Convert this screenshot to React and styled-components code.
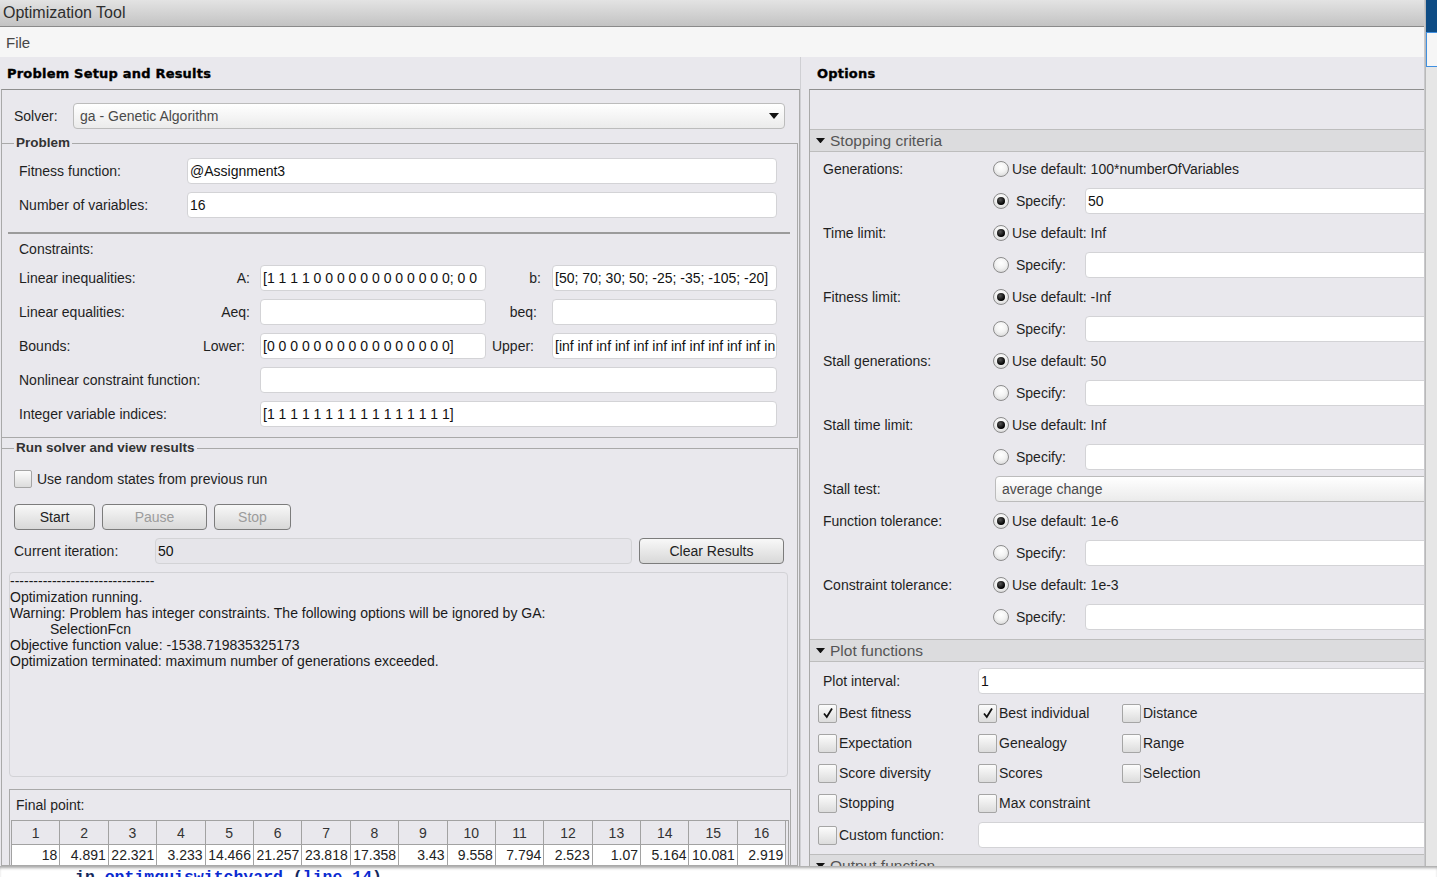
import React from 'react'
import styled, { createGlobalStyle } from 'styled-components'

const GlobalStyle = createGlobalStyle`
  html, body { margin: 0; padding: 0; background: #ffffff; }
  body { font-family: "Liberation Sans", Arial, sans-serif; font-size: 14px; color: #1f1f1f; }
  *, *::before, *::after { box-sizing: border-box; }
`

const Screen = styled.div`
  width: 1437px;
  height: 877px;
  overflow: hidden;
  display: grid;
  grid-template-columns: 1425px 12px;
  grid-template-rows: 866px 11px;
`

const Window = styled.div`
  display: flex;
  flex-direction: column;
  min-height: 0;
  overflow: hidden;
  background: #e9e8ed;
  border-right: 1px solid #c9c9cc;
`

const TitleBar = styled.div`
  height: 27px;
  flex: none;
  display: flex;
  align-items: center;
  padding-left: 3px;
  background: linear-gradient(#e3e3e3, #c3c3c3);
  border-bottom: 1px solid #8a8a8a;
  font-size: 16px;
  color: #2e2e2e;
`

const MenuBar = styled.div`
  height: 30px;
  flex: none;
  display: flex;
  align-items: center;
  padding-left: 6px;
  background: #f6f6f6;
  font-size: 15px;
  color: #474747;
`

const Body = styled.div`
  flex: 1;
  min-height: 0;
  display: grid;
  grid-template-columns: 800px 9px 1fr;
`

const Splitter = styled.div`
  border-left: 1px solid #cfcfd3;
`

const Column = styled.div`
  display: flex;
  flex-direction: column;
  min-height: 0;
  min-width: 0;
  overflow: hidden;
`

const PanelTitle = styled.div`
  height: 32px;
  flex: none;
  display: flex;
  align-items: center;
  padding-left: ${p => p.$indent}px;
  font-family: "DejaVu Sans", sans-serif;
  font-weight: bold;
  font-size: 13px;
  letter-spacing: 0.2px;
  color: #000;
  -webkit-text-stroke: 0.35px #000;
`

const LeftBox = styled.div`
  flex: 1;
  min-height: 0;
  margin-left: 1px;
  padding-top: 13px;
  border-top: 1px solid #8f8f8f;
  border-left: 1px solid #a9a9a9;
  border-right: 1px solid #a9a9a9;
  display: flex;
  flex-direction: column;
`

const SolverRow = styled.div`
  height: 26px;
  flex: none;
  display: flex;
  align-items: center;
  padding: 0 14px 0 12px;
`

const SolverLabel = styled.span`
  width: 59px;
  flex: none;
`

const Select = styled.div`
  flex: 1;
  height: 26px;
  margin: ${p => p.$margin || '0'};
  display: flex;
  align-items: center;
  justify-content: space-between;
  padding: 0 5px 0 6px;
  border: 1px solid #bcbcbc;
  border-radius: 4px;
  background: linear-gradient(#ffffff, #ebebeb);
  color: #4a4a4a;
  white-space: nowrap;
`

const Group = styled.fieldset`
  margin: ${p => p.$top}px 1px 0 0;
  min-width: 0;
  padding: ${p => p.$pad};
  border: 1px solid #a9a9a9;
  border-left: none;
  display: flex;
  flex-direction: column;
  flex: ${p => (p.$grow ? 1 : 'none')};
`

const Legend = styled.legend`
  margin-left: ${p => p.$shift}px;
  padding: 0 2px;
  line-height: 16px;
  font-weight: bold;
  font-size: 13.5px;
  color: #333;
`

const FieldGrid = styled.div`
  display: grid;
  grid-template-columns: 168px 1fr;
  grid-auto-rows: 26px;
  row-gap: 8px;
  align-items: center;
`

const TextField = styled.div`
  height: 26px;
  min-width: 0;
  flex: ${p => (p.$grow ? 1 : 'none')};
  grid-column: ${p => p.$span || 'auto'};
  margin: ${p => p.$margin || '0'};
  display: flex;
  align-items: center;
  padding: 0 2px;
  border: 1px solid #d3d3d6;
  border-radius: 4px;
  background: ${p => (p.$disabled ? '#e6e5ea' : '#ffffff')};
  color: #111;
  white-space: nowrap;
  overflow: hidden;
`

const Separator = styled.div`
  height: 2px;
  margin: 14px -13px 0 -11px;
  background: #9b9b9b;
`

const SubTitle = styled.div`
  height: 26px;
  margin-top: 2px;
  display: flex;
  align-items: center;
`

const ConstraintGrid = styled.div`
  margin-top: 3px;
  display: grid;
  grid-template-columns: 201px 40px 226px 66px 1fr;
  grid-auto-rows: 26px;
  row-gap: 8px;
  align-items: center;
`

const Label = styled.span`
  grid-column: ${p => p.$span || 'auto'};
  white-space: nowrap;
`

const SideLabel = styled.span`
  display: flex;
  justify-content: flex-end;
  padding-right: ${p => p.$pad}px;
  white-space: nowrap;
`

const CheckRow = styled.label`
  height: 18px;
  display: flex;
  align-items: center;
  gap: 5px;
  padding-left: 5px;
`

const Check = styled.span`
  width: ${p => p.$size}px;
  height: ${p => p.$size}px;
  flex: none;
  display: inline-flex;
  align-items: center;
  justify-content: center;
  border: 1px solid #a5a5a5;
  border-radius: 2px;
  background: linear-gradient(#fcfcfc, #dcdcdc);
`

const ButtonRow = styled.div`
  margin-top: 16px;
  padding-left: 5px;
  display: flex;
  gap: 7px;
`

const Button = styled.button`
  width: ${p => p.$w}px;
  height: 26px;
  flex: none;
  padding: 0;
  margin-left: ${p => p.$gap || 0}px;
  border: 1px solid #7c7c7c;
  border-radius: 4px;
  background: linear-gradient(#f8f8f8, #d8d8d8);
  font-family: "Liberation Sans", Arial, sans-serif;
  font-size: 14px;
  color: ${p => (p.disabled ? '#9c9c9c' : '#222')};
`

const IterRow = styled.div`
  margin-top: 8px;
  padding: 0 4px 0 5px;
  display: flex;
  align-items: center;
`

const IterLabel = styled.span`
  width: 141px;
  flex: none;
`

const LogBox = styled.div`
  height: 205px;
  margin-top: 8px;
  border: 1px solid #d2d2d6;
  border-radius: 4px;
  font-size: 14px;
  line-height: 16px;
  color: #1a1a1a;
`

const LogLine = styled.div`
  padding-left: ${p => p.$indent || 0}px;
  white-space: nowrap;
`

const FinalBox = styled.div`
  margin: 12px -3px 0 0;
  padding: 0 0 0 1px;
  border: 1px solid #a9a9a9;
  border-bottom: none;
  flex: 1;
`

const FinalLabel = styled.div`
  height: 30px;
  padding-left: 5px;
  display: flex;
  align-items: center;
`

const PointTable = styled.div`
  width: 778px;
  display: grid;
  grid-template-columns: repeat(16, 48.4px) 3px;
  border-left: 1px solid #a2a2a2;
  border-top: 1px solid #a2a2a2;
`

const HeadCell = styled.div`
  height: 24px;
  display: flex;
  align-items: center;
  justify-content: center;
  border-right: 1px solid #a2a2a2;
  border-bottom: 1px solid #a2a2a2;
  color: #333;
`

const DataCell = styled.div`
  height: 20px;
  display: flex;
  align-items: center;
  justify-content: flex-end;
  padding-right: 2px;
  background: #ffffff;
  border-right: 1px solid #a2a2a2;
  color: #222;
`

const TableEdge = styled.div`
  border-right: 1px solid #a2a2a2;
`

const RightBox = styled.div`
  flex: 1;
  min-height: 0;
  overflow: hidden;
  border-top: 1px solid #8f8f8f;
  border-left: 1px solid #a9a9a9;
`

const TopGap = styled.div`
  height: 39px;
`

const SectionHeader = styled.div`
  height: 23px;
  display: flex;
  align-items: center;
  gap: 5px;
  padding-left: 6px;
  background: #dcdcde;
  border-top: 1px solid #bdbdbd;
  border-bottom: 1px solid #bdbdbd;
  font-size: 15.5px;
  color: #555;
`

const SectionBody = styled.div`
  padding: ${p => p.$pad};
`

const OptionRow = styled.div`
  height: 32px;
  display: grid;
  grid-template-columns: 170px 1fr;
  align-items: center;
  padding-left: 13px;
`

const Choice = styled.div`
  display: flex;
  align-items: center;
  min-width: 0;
`

const Radio = styled.span`
  width: 16px;
  height: 16px;
  flex: none;
  display: inline-flex;
  align-items: center;
  justify-content: center;
  border: 1px solid #8c8c8c;
  border-radius: 50%;
  background: radial-gradient(circle at 50% 35%, #ffffff 0%, #f3f3f3 45%, #cfcfcf 100%);
  &::after {
    content: '';
    width: 8px;
    height: 8px;
    border-radius: 50%;
    background: ${p => (p.$on ? 'radial-gradient(circle at 40% 35%, #555, #000 70%)' : 'transparent')};
  }
`

const ChoiceText = styled.span`
  margin-left: ${p => p.$gap}px;
  width: ${p => (p.$w ? `${p.$w}px` : 'auto')};
  flex: none;
  white-space: nowrap;
`

const PlotRow = styled.div`
  height: 26px;
  margin-top: ${p => p.$top || 0}px;
  display: grid;
  grid-template-columns: 160px 1fr;
  align-items: center;
`

const PlotLabel = styled.span`
  padding-left: 5px;
`

const CheckGrid = styled.div`
  margin-top: 4px;
  display: grid;
  grid-template-columns: 160px 144px 1fr;
  grid-auto-rows: 30px;
  align-items: center;
`

const CheckItem = styled.div`
  display: flex;
  align-items: center;
  gap: 2px;
  white-space: nowrap;
`

const DesktopEdge = styled.div`
  display: flex;
  flex-direction: column;
  background: #e6e6e6;
  border-left: 1px solid #b9b9b9;
`

const EdgeBar = styled.div`
  height: 32px;
  background: #0e4c84;
`

const EdgeTab = styled.div`
  height: 35px;
  background: #f6f6f6;
  border: 1px solid #3f8fe0;
  border-right: none;
`

const ConsoleStrip = styled.div`
  grid-column: 1 / span 2;
  overflow: hidden;
  padding: 2px 0 0 75px;
  background: #ffffff;
  box-shadow: inset 0 3px 3px -1px rgba(0, 0, 0, 0.35);
  font-family: "Liberation Mono", monospace;
  font-weight: bold;
  font-size: 16.5px;
  line-height: 20px;
  white-space: nowrap;
`

const ConsoleLink = styled.span`
  color: ${p => (p.$plain ? '#14285c' : '#0a2bd0')};
`

const Caret = ({ size = 10 }) => (
  <svg width={size} height={size * 0.6} viewBox="0 0 10 6">
    <path d="M0 0 L10 0 L5 6 Z" fill="#111" />
  </svg>
)

const Tick = () => (
  <svg width="14" height="14" viewBox="0 0 14 14">
    <path d="M3 7.5 L5.8 11 L11 2.5" fill="none" stroke="#111" strokeWidth="1.8" />
  </svg>
)

const Box = ({ on, size = 19 }) => <Check $size={size}>{on && <Tick />}</Check>

const stopping = [
  { label: 'Generations:', def: '100*numberOfVariables', useDefault: false, value: '50' },
  { label: 'Time limit:', def: 'Inf', useDefault: true },
  { label: 'Fitness limit:', def: '-Inf', useDefault: true },
  { label: 'Stall generations:', def: '50', useDefault: true },
  { label: 'Stall time limit:', def: 'Inf', useDefault: true },
  { select: 'Stall test:', value: 'average change' },
  { label: 'Function tolerance:', def: '1e-6', useDefault: true },
  { label: 'Constraint tolerance:', def: '1e-3', useDefault: true },
]

const plots = [
  ['Best fitness', true], ['Best individual', true], ['Distance', false],
  ['Expectation', false], ['Genealogy', false], ['Range', false],
  ['Score diversity', false], ['Scores', false], ['Selection', false],
  ['Stopping', false], ['Max constraint', false],
]

const finalPoint = ['18', '4.891', '22.321', '3.233', '14.466', '21.257', '23.818', '17.358',
  '3.43', '9.558', '7.794', '2.523', '1.07', '5.164', '10.081', '2.919']

function StoppingOption({ item }) {
  if (item.select) {
    return (
      <OptionRow>
        <Label>{item.select}</Label>
        <Select $margin="0 -8px 0 2px">{item.value}</Select>
      </OptionRow>
    )
  }
  return (
    <>
      <OptionRow>
        <Label>{item.label}</Label>
        <Choice>
          <Radio $on={item.useDefault} />
          <ChoiceText $gap={3}>Use default: {item.def}</ChoiceText>
        </Choice>
      </OptionRow>
      <OptionRow>
        <span />
        <Choice>
          <Radio $on={!item.useDefault} />
          <ChoiceText $gap={7} $w={69}>Specify:</ChoiceText>
          <TextField $grow $margin="0 -8px 0 0">{item.value || ''}</TextField>
        </Choice>
      </OptionRow>
    </>
  )
}

export default function App() {
  return (
    <Screen>
      <GlobalStyle />
      <Window>
        <TitleBar>Optimization Tool</TitleBar>
        <MenuBar>File</MenuBar>
        <Body>
          <Column>
            <PanelTitle $indent={7}>Problem Setup and Results</PanelTitle>
            <LeftBox>
              <SolverRow>
                <SolverLabel>Solver:</SolverLabel>
                <Select>
                  ga - Genetic Algorithm
                  <Caret />
                </Select>
              </SolverRow>

              <Group $top={6} $pad="7px 20px 10px 17px">
                <Legend $shift={-5}>Problem</Legend>
                <FieldGrid>
                  <Label>Fitness function:</Label>
                  <TextField>@Assignment3</TextField>
                  <Label>Number of variables:</Label>
                  <TextField>16</TextField>
                </FieldGrid>
                <Separator />
                <SubTitle>Constraints:</SubTitle>
                <ConstraintGrid>
                  <Label>Linear inequalities:</Label>
                  <SideLabel $pad={10}>A:</SideLabel>
                  <TextField>[1 1 1 1 0 0 0 0 0 0 0 0 0 0 0 0; 0 0</TextField>
                  <SideLabel $pad={11}>b:</SideLabel>
                  <TextField>[50; 70; 30; 50; -25; -35; -105; -20]</TextField>

                  <Label>Linear equalities:</Label>
                  <SideLabel $pad={10}>Aeq:</SideLabel>
                  <TextField />
                  <SideLabel $pad={15}>beq:</SideLabel>
                  <TextField />

                  <Label>Bounds:</Label>
                  <SideLabel $pad={15}>Lower:</SideLabel>
                  <TextField>[0 0 0 0 0 0 0 0 0 0 0 0 0 0 0 0]</TextField>
                  <SideLabel $pad={18}>Upper:</SideLabel>
                  <TextField>[inf inf inf inf inf inf inf inf inf inf inf in</TextField>

                  <Label $span="1 / span 2">Nonlinear constraint function:</Label>
                  <TextField $span="3 / span 3" />

                  <Label $span="1 / span 2">Integer variable indices:</Label>
                  <TextField $span="3 / span 3">[1 1 1 1 1 1 1 1 1 1 1 1 1 1 1 1]</TextField>
                </ConstraintGrid>
              </Group>

              <Group $top={2} $pad="14px 9px 0 7px" $grow>
                <Legend $shift={5}>Run solver and view results</Legend>
                <CheckRow>
                  <Box size={18} />
                  Use random states from previous run
                </CheckRow>
                <ButtonRow>
                  <Button $w={81}>Start</Button>
                  <Button $w={105} disabled>Pause</Button>
                  <Button $w={77} disabled>Stop</Button>
                </ButtonRow>
                <IterRow>
                  <IterLabel>Current iteration:</IterLabel>
                  <TextField $grow $disabled>50</TextField>
                  <Button $w={145} $gap={7}>Clear Results</Button>
                </IterRow>
                <LogBox>
                  <LogLine>-------------------------------</LogLine>
                  <LogLine>Optimization running.</LogLine>
                  <LogLine>Warning: Problem has integer constraints. The following options will be ignored by GA:</LogLine>
                  <LogLine $indent={40}>SelectionFcn</LogLine>
                  <LogLine>Objective function value: -1538.719835325173</LogLine>
                  <LogLine>Optimization terminated: maximum number of generations exceeded.</LogLine>
                </LogBox>
                <FinalBox>
                  <FinalLabel>Final point:</FinalLabel>
                  <PointTable>
                    {finalPoint.map((_, i) => <HeadCell key={i}>{i + 1}</HeadCell>)}
                    <TableEdge />
                    {finalPoint.map((v, i) => <DataCell key={i}>{v}</DataCell>)}
                    <TableEdge />
                  </PointTable>
                </FinalBox>
              </Group>
            </LeftBox>
          </Column>

          <Splitter />

          <Column>
            <PanelTitle $indent={8}>Options</PanelTitle>
            <RightBox>
              <TopGap />
              <SectionHeader>
                <Caret size={9} />
                Stopping criteria
              </SectionHeader>
              <SectionBody $pad="1px 0 6px 0">
                {stopping.map((item, i) => <StoppingOption key={i} item={item} />)}
              </SectionBody>

              <SectionHeader>
                <Caret size={9} />
                Plot functions
              </SectionHeader>
              <SectionBody $pad="6px 0 6px 8px">
                <PlotRow>
                  <PlotLabel>Plot interval:</PlotLabel>
                  <TextField $margin="0 -8px 0 0">1</TextField>
                </PlotRow>
                <CheckGrid>
                  {plots.map(([name, on]) => (
                    <CheckItem key={name}>
                      <Box on={on} />
                      {name}
                    </CheckItem>
                  ))}
                </CheckGrid>
                <PlotRow $top={4}>
                  <CheckItem>
                    <Box />
                    Custom function:
                  </CheckItem>
                  <TextField $margin="0 -8px 0 0" />
                </PlotRow>
              </SectionBody>

              <SectionHeader>
                <Caret size={9} />
                Output function
              </SectionHeader>
            </RightBox>
          </Column>
        </Body>
      </Window>

      <DesktopEdge>
        <EdgeBar />
        <EdgeTab />
      </DesktopEdge>

      <ConsoleStrip>
        <ConsoleLink $plain>in </ConsoleLink>
        <ConsoleLink>optimguiswitchyard</ConsoleLink>
        <ConsoleLink $plain> (</ConsoleLink>
        <ConsoleLink>line 14</ConsoleLink>
        <ConsoleLink $plain>)</ConsoleLink>
      </ConsoleStrip>
    </Screen>
  )
}
